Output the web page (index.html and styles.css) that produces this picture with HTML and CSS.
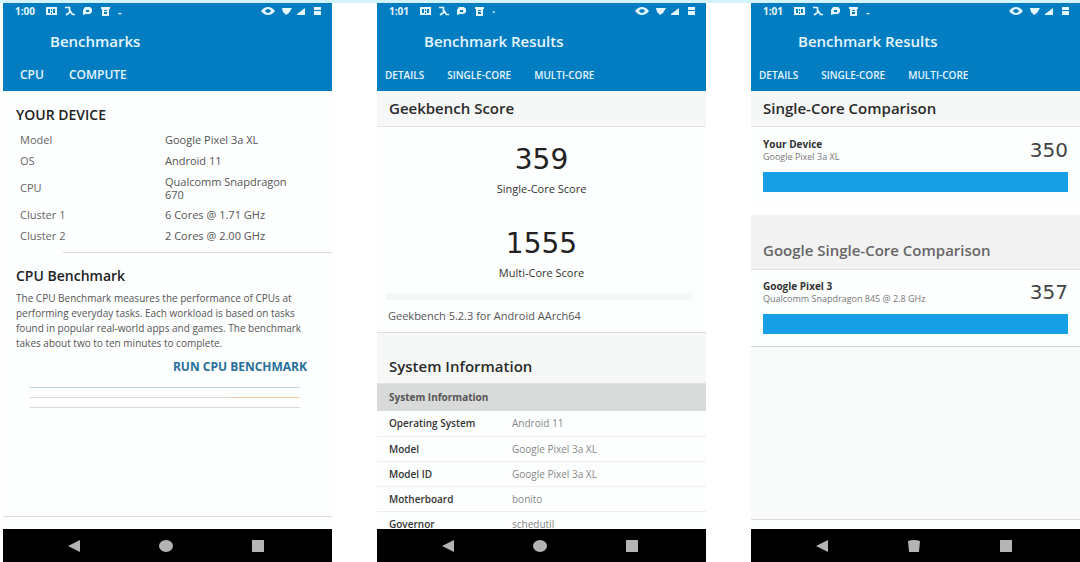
FILE: index.html
```html
<!DOCTYPE html>
<html lang="en">

<head>
    <meta charset="utf-8">
    <title>Geekbench 5</title>
    <link rel="stylesheet" href="styles.css">
</head>

<body>
    <svg class="sprite" aria-hidden="true">
        <symbol id="photo" viewBox="0 0 11 10">
            <path fill-rule="evenodd" d="M0 1h11v8H0zM2 3v4h2V3zM5 3v2h1V3zM5 6v2h1V6zM7 3v4h2V3z" />
        </symbol>
        <symbol id="tools" viewBox="0 0 11 10">
            <path d="M1 1.5h4.5v5L2 9M5.5 4l3 4.5H11" fill="none" stroke="currentColor" stroke-width="1.7" />
        </symbol>
        <symbol id="chat" viewBox="0 0 11 10">
            <path fill-rule="evenodd" d="M3 1h5l2 2v3L8 8H4L1 9V4zM4 4v2h3V4z" />
        </symbol>
        <symbol id="bin" viewBox="0 0 11 10">
            <path fill-rule="evenodd" d="M1 1h9v2H9v7H2V3H1zM4 4v1h3V4zM4 6v2h3V6z" />
        </symbol>
        <symbol id="eye" viewBox="0 0 14 10">
            <path fill-rule="evenodd" d="M0 5q3-4 7-4t7 4q-3 4-7 4T0 5zM4 5q1 2 3 2t3-2Q9 3 7 3T4 5z" />
        </symbol>
        <symbol id="wifi" viewBox="0 0 10 10">
            <path d="M0 2h10L7 7 4 9 1 6z" />
        </symbol>
        <symbol id="signal" viewBox="0 0 10 10">
            <path d="M1 8l8-6v7H1z" />
        </symbol>
        <symbol id="battery" viewBox="0 0 10 10">
            <path d="M2 1h7v3H2zM2 5h7v4H2z" />
        </symbol>
        <symbol id="back" viewBox="0 0 14 14">
            <path d="M1 7l12-6v12z" />
        </symbol>
        <symbol id="home" viewBox="0 0 14 14">
            <ellipse cx="7" cy="7" rx="7" ry="6" />
        </symbol>
        <symbol id="home-square" viewBox="0 0 14 14">
            <path d="M1 2q6-2 12 0l-1 11H2z" />
        </symbol>
        <symbol id="recent" viewBox="0 0 14 14">
            <path d="M1 1h12v12H1z" />
        </symbol>
    </svg>

    <div class="page">
        <section class="phone">
            <header class="app-bar">
                <div class="status">
                    <span class="clock">1:00</span>
                    <svg><use href="#photo" /></svg>
                    <svg><use href="#tools" /></svg>
                    <svg><use href="#chat" /></svg>
                    <svg><use href="#bin" /></svg>
                    <span class="more">-</span>
                    <svg class="eye"><use href="#eye" /></svg>
                    <svg class="small"><use href="#wifi" /></svg>
                    <svg class="small"><use href="#signal" /></svg>
                    <svg class="small"><use href="#battery" /></svg>
                </div>
                <h1>Benchmarks</h1>
                <nav class="tabs wide">
                    <button type="button">CPU</button>
                    <button type="button">COMPUTE</button>
                </nav>
            </header>
            <main class="home">
                <h2>YOUR DEVICE</h2>
                <table class="device">
                    <tr><th>Model</th><td>Google Pixel 3a XL</td></tr>
                    <tr><th>OS</th><td>Android 11</td></tr>
                    <tr class="tall"><th>CPU</th><td>Qualcomm Snapdragon<br>670</td></tr>
                    <tr><th>Cluster 1</th><td>6 Cores @ 1.71 GHz</td></tr>
                    <tr><th>Cluster 2</th><td>2 Cores @ 2.00 GHz</td></tr>
                </table>
                <hr>
                <h2>CPU Benchmark</h2>
                <p>The CPU Benchmark measures the performance of CPUs at
                    performing everyday tasks. Each workload is based on tasks
                    found in popular real-world apps and games. The benchmark
                    takes about two to ten minutes to complete.</p>
                <button type="button" class="run">RUN CPU BENCHMARK</button>
                <div class="rules">
                    <hr class="blue">
                    <hr class="orange">
                    <hr>
                </div>
            </main>
            <nav class="system-nav">
                <button type="button" aria-label="Back"><svg><use href="#back" /></svg></button>
                <button type="button" aria-label="Home"><svg><use href="#home" /></svg></button>
                <button type="button" aria-label="Recent"><svg><use href="#recent" /></svg></button>
            </nav>
        </section>

        <section class="phone">
            <header class="app-bar">
                <div class="status">
                    <span class="clock">1:01</span>
                    <svg><use href="#photo" /></svg>
                    <svg><use href="#tools" /></svg>
                    <svg><use href="#chat" /></svg>
                    <svg><use href="#bin" /></svg>
                    <span class="more">·</span>
                    <svg class="eye"><use href="#eye" /></svg>
                    <svg class="small"><use href="#wifi" /></svg>
                    <svg class="small"><use href="#signal" /></svg>
                    <svg class="small"><use href="#battery" /></svg>
                </div>
                <h1>Benchmark Results</h1>
                <nav class="tabs">
                    <button type="button">DETAILS</button>
                    <button type="button">SINGLE-CORE</button>
                    <button type="button">MULTI-CORE</button>
                </nav>
            </header>
            <main>
                <h2 class="section">Geekbench Score</h2>
                <div class="scores">
                    <div class="score">359</div>
                    <div class="caption">Single-Core Score</div>
                    <div class="score">1555</div>
                    <div class="caption">Multi-Core Score</div>
                </div>
                <div class="strip"></div>
                <p class="version">Geekbench 5.2.3 for Android AArch64</p>
                <h2 class="section info">System Information</h2>
                <h3>System Information</h3>
                <table class="system">
                    <tr><th>Operating System</th><td>Android 11</td></tr>
                    <tr><th>Model</th><td>Google Pixel 3a XL</td></tr>
                    <tr><th>Model ID</th><td>Google Pixel 3a XL</td></tr>
                    <tr><th>Motherboard</th><td>bonito</td></tr>
                    <tr><th>Governor</th><td>schedutil</td></tr>
                </table>
            </main>
            <nav class="system-nav">
                <button type="button" aria-label="Back"><svg><use href="#back" /></svg></button>
                <button type="button" aria-label="Home"><svg><use href="#home" /></svg></button>
                <button type="button" aria-label="Recent"><svg><use href="#recent" /></svg></button>
            </nav>
        </section>

        <section class="phone">
            <header class="app-bar">
                <div class="status">
                    <span class="clock">1:01</span>
                    <svg><use href="#photo" /></svg>
                    <svg><use href="#tools" /></svg>
                    <svg><use href="#chat" /></svg>
                    <svg><use href="#bin" /></svg>
                    <span class="more">-</span>
                    <svg class="eye"><use href="#eye" /></svg>
                    <svg class="small"><use href="#wifi" /></svg>
                    <svg class="small"><use href="#signal" /></svg>
                    <svg class="small"><use href="#battery" /></svg>
                </div>
                <h1>Benchmark Results</h1>
                <nav class="tabs">
                    <button type="button">DETAILS</button>
                    <button type="button">SINGLE-CORE</button>
                    <button type="button">MULTI-CORE</button>
                </nav>
            </header>
            <main class="compare">
                <h2 class="section">Single-Core Comparison</h2>
                <div class="result">
                    <div class="names">
                        <strong>Your Device</strong>
                        <small>Google Pixel 3a XL</small>
                    </div>
                    <span class="points">350</span>
                    <div class="bar" style="width: 100%"></div>
                </div>
                <h2 class="section google">Google Single-Core Comparison</h2>
                <div class="result last">
                    <div class="names">
                        <strong>Google Pixel 3</strong>
                        <small>Qualcomm Snapdragon 845 @ 2.8 GHz</small>
                    </div>
                    <span class="points">357</span>
                    <div class="bar" style="width: 100%"></div>
                </div>
            </main>
            <nav class="system-nav">
                <button type="button" aria-label="Back"><svg><use href="#back" /></svg></button>
                <button type="button" aria-label="Home"><svg><use href="#home-square" /></svg></button>
                <button type="button" aria-label="Recent"><svg><use href="#recent" /></svg></button>
            </nav>
        </section>
    </div>
</body>

</html>
```
FILE: styles.css
```css
* {
    box-sizing: border-box;
}

body {
    margin: 0;
    font-family: "Open Sans", "Noto Sans", sans-serif;
    font-size: 11px;
    color: #333;
    background-color: #fff;
}

h1, h2, h3, p {
    margin: 0;
}

button {
    padding: 0;
    border: none;
    background: none;
    font: inherit;
    color: inherit;
    cursor: pointer;
}

hr {
    margin: 0;
    border: none;
    border-top: 1px solid #d8d8d8;
}

.sprite {
    display: none;
}

svg {
    fill: currentColor;
}

.page {
    display: grid;
    grid-template-columns: repeat(3, minmax(0, 1fr));
    gap: 45px;
    height: 100vh;
    padding-left: 3px;
    border-top: 3px solid #d3f3fd;
}

.phone {
    display: flex;
    flex-direction: column;
    min-height: 0;
    background-color: #fdfefe;
}

main {
    flex: 1;
    min-height: 0;
    overflow: hidden;
}

/* app bar */

.app-bar {
    height: 88px;
    background-color: #027dc1;
    color: #e4f6ff;
}

.status {
    display: flex;
    align-items: center;
    gap: 7px;
    height: 16px;
    padding: 0 10px 0 12px;
}

.status svg {
    width: 11px;
    height: 10px;
}

.status .eye {
    width: 14px;
    margin-left: auto;
}

.status .small {
    width: 10px;
}

.status .small + .small {
    margin-left: -3px;
}

.status .small:last-child {
    margin-left: -1px;
}

.clock {
    width: 24px;
    font-size: 10px;
    font-weight: 700;
}

.more {
    font-weight: 700;
}

.app-bar h1 {
    padding-left: 47px;
    font-size: 15px;
    font-weight: 600;
    line-height: 44px;
}

.tabs {
    display: flex;
    gap: 23px;
    padding: 0 8px;
    font-size: 10px;
    font-weight: 600;
    line-height: 24px;
}

.tabs.wide {
    gap: 25px;
    padding: 0 17px;
    font-size: 12px;
}

/* benchmark home */

.home {
    padding: 14px 16px 0 13px;
    margin-bottom: 12px;
    border-bottom: 1px solid #ddd;
}

.home h2 {
    font-size: 14px;
    font-weight: 600;
    line-height: 20px;
    color: #222;
}

table {
    border-collapse: collapse;
    width: 100%;
}

th, td {
    padding: 0;
    text-align: left;
}

.device {
    margin: 4px 0 6px;
}

.device th {
    width: 149px;
    padding-left: 4px;
    font-weight: 400;
    color: #666;
}

.device td {
    color: #555;
}

.device tr {
    height: 21px;
}

.device .tall {
    height: 33px;
    line-height: 13px;
}

.home > hr {
    margin: 0 -16px 13px 47px;
}

.home p {
    margin-top: 5px;
    font-size: 10px;
    line-height: 15px;
    color: #555;
}

.run {
    display: block;
    margin: 6px 9px 10px auto;
    font-size: 12px;
    font-weight: 700;
    line-height: 20px;
    color: #28709b;
}

.rules {
    display: grid;
    gap: 9px;
    margin: 0 16px 0 14px;
}

.rules .blue {
    border-color: #bcd5e2;
}

.rules .orange {
    border-image: linear-gradient(to right, #d8d8d8 70%, #f5c6a0 80%) 1;
}

/* result summary */

.section {
    padding-left: 12px;
    font-size: 15px;
    font-weight: 600;
    line-height: 35px;
    color: #2a2a2a;
    background-color: #f6f7f7;
    border-bottom: 1px solid #e2e2e2;
}

.scores {
    padding: 13px 0 11px;
    text-align: center;
}

.score {
    font-family: "DejaVu Sans", sans-serif;
    font-size: 28px;
    line-height: 40px;
    color: #222;
}

.caption {
    margin-bottom: 26px;
    font-size: 11px;
    line-height: 18px;
}

.caption:last-child {
    margin-bottom: 0;
}

.strip {
    height: 7px;
    margin: 0 14px 0 9px;
    background-color: #f5f6f7;
}

.version {
    padding-left: 11px;
    line-height: 32px;
    color: #555;
}

.info {
    padding-top: 17px;
    line-height: 33px;
    border-top: 1px solid #ddd;
}

h3 {
    padding-left: 12px;
    font-size: 10px;
    font-weight: 700;
    line-height: 27px;
    color: #555;
    background-color: #d9dada;
}

.system tr {
    height: 25px;
    border-bottom: 1px solid #eee;
}

.system th {
    width: 135px;
    padding-left: 12px;
    font-size: 10px;
    font-weight: 600;
}

.system td {
    font-size: 10px;
    color: #888;
}

/* comparison */

.compare {
    background-color: #f9fafa;
    border-bottom: 1px solid #ddd;
    margin-bottom: 9px;
}

.result {
    display: flex;
    flex-wrap: wrap;
    align-items: center;
    justify-content: space-between;
    gap: 8px 0;
    padding: 9px 12px 14px;
    background-color: #fdfefe;
    border-bottom: 9px solid #fff;
}

.result.last {
    padding-top: 8px;
    padding-bottom: 12px;
    border-bottom: 1px solid #ccd4d8;
}

.names {
    display: grid;
}

.names strong {
    font-size: 10px;
    line-height: 13px;
}

.names small {
    font-size: 9px;
    line-height: 12px;
    color: #777;
}

.points {
    font-family: "DejaVu Sans", sans-serif;
    font-size: 20px;
    line-height: 28px;
    color: #444;
}

.bar {
    height: 20px;
    background-color: #18a0e7;
}

.google {
    padding-top: 17px;
    line-height: 37px;
    color: #666;
    background-color: #f2f2f2;
}

/* android navigation */

.system-nav {
    display: flex;
    align-items: center;
    justify-content: center;
    gap: 78px;
    height: 33px;
    padding-right: 3px;
    background-color: #000;
    color: #b4b4b4;
}

.system-nav svg {
    display: block;
    width: 14px;
    height: 14px;
}
```
